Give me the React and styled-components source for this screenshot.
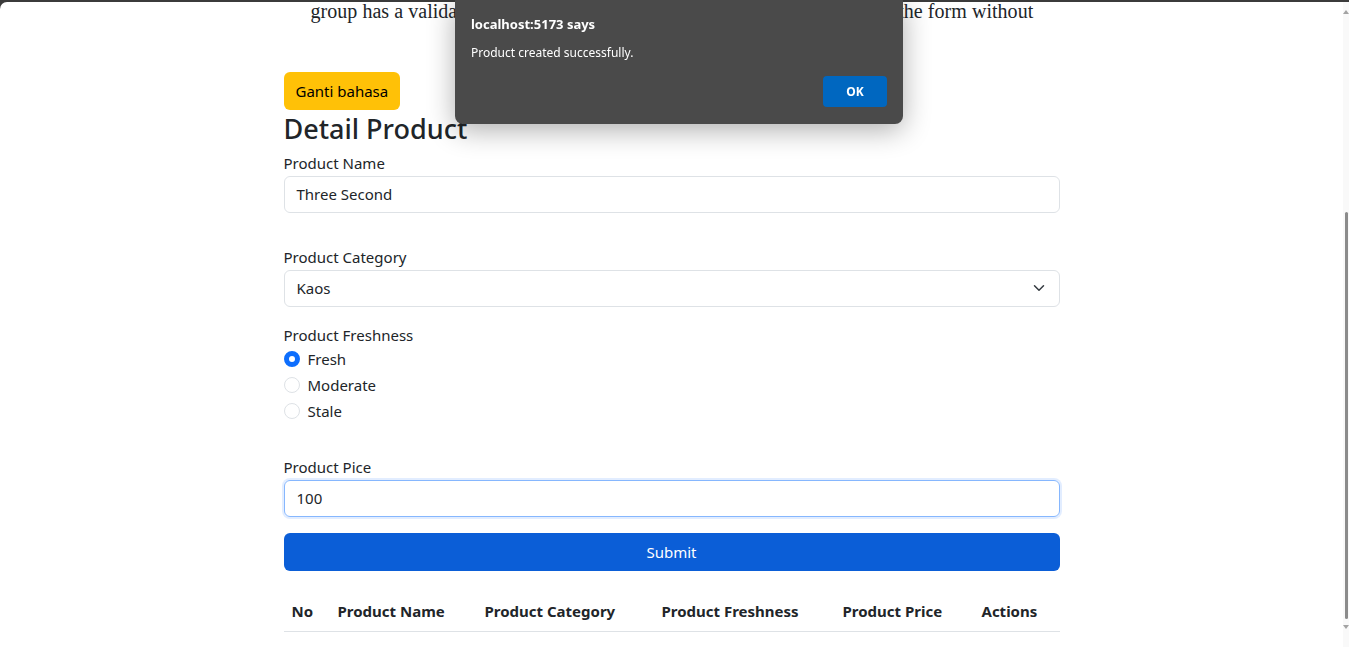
import React from "react";
import styled, { createGlobalStyle } from "styled-components";

const GlobalStyle = createGlobalStyle`
  html, body { margin: 0; padding: 0; background: #3b3b3b; }
  body { font-family: "Noto Sans", "Open Sans", sans-serif; color: #212529; }
  * { box-sizing: border-box; }
`;

const Frame = styled.div`
  display: flex;
  height: 647px;
  padding-top: 2px;
  overflow: hidden;
`;

const Page = styled.main`
  flex: 1;
  background: #fff;
  border-top-left-radius: 7px;
  overflow: hidden;
`;

const ScrollTrack = styled.div`
  width: 6px;
  background: #f9f9f9;
  display: flex;
  flex-direction: column;
  align-items: center;
`;

const Arrow = styled.div`
  width: 0;
  height: 0;
  border-left: 3px solid transparent;
  border-right: 3px solid transparent;
  ${(p) => (p.$down ? "border-top: 4px solid #a3a3a3;" : "border-bottom: 4px solid #a3a3a3;")}
  margin-top: ${(p) => p.$mt}px;
`;

const Thumb = styled.div`
  width: 3px;
  margin-left: 1px;
  height: 407px;
  margin-top: 198px;
  background: #8b8b8b;
  border-radius: 2px;
`;

const Container = styled.div`
  width: 776px;
  margin: 0 auto;
`;

const Intro = styled.p`
  font-family: "Liberation Serif", serif;
  font-size: 20px;
  line-height: 23px;
  margin: -2px 0 0;
  padding-left: 27px;
  white-space: nowrap;
  letter-spacing: 0.04px;
  color: #212529;
`;

const LangButton = styled.button`
  margin-top: 49px;
  height: 38px;
  padding: 0 12px;
  background: #ffc107;
  border: none;
  border-radius: 6px;
  font-family: inherit;
  font-size: 15px;
  color: #000;
  display: block;
`;

const Title = styled.h2`
  margin: 0 0 6px;
  padding-top: 2px;
  font-size: 27px;
  font-weight: 500;
  line-height: 33px;
`;

const Field = styled.div`
  margin-bottom: ${(p) => p.$mb}px;
`;

const Label = styled.label`
  display: block;
  font-size: 15px;
  line-height: 24px;
  margin-bottom: 1px;
`;

const Input = styled.div`
  height: 37px;
  border: 1px solid ${(p) => (p.$focus ? "#86b7fe" : "#dee2e6")};
  border-radius: 6px;
  padding: 0 12px 1px;
  display: flex;
  align-items: center;
  justify-content: space-between;
  font-size: 15px;
  ${(p) => (p.$focus ? "box-shadow: 0 0 0 2px rgba(13,110,253,0.12);" : "")}
`;

const RadioList = styled.div`
  display: flex;
  flex-direction: column;
  gap: 2px;
  margin-top: -1px;
`;

const RadioRow = styled.div`
  display: flex;
  align-items: center;
  height: 24px;
  gap: 8px;
  font-size: 15px;
`;

const RadioDot = styled.span`
  width: 16px;
  height: 16px;
  border-radius: 50%;
  border: ${(p) => (p.$checked ? "5px solid #0d6efd" : "1px solid #dee2e6")};
  background: #fff;
`;

const SubmitButton = styled.button`
  display: block;
  width: 100%;
  height: 38px;
  margin-bottom: 20px;
  background: #0b5ed7;
  border: none;
  border-radius: 6px;
  color: #fff;
  font-family: inherit;
  font-size: 15px;
`;

const Table = styled.table`
  width: 100%;
  border-collapse: collapse;
  table-layout: fixed;
`;

const Th = styled.th`
  padding: 8px;
  text-align: left;
  font-size: 15px;
  font-weight: 700;
  line-height: 24px;
  border-bottom: 1px solid #dee2e6;
  white-space: nowrap;
`;

const Dialog = styled.div`
  position: fixed;
  top: 0;
  left: 455px;
  width: 448px;
  height: 124px;
  background: #4a4a4a;
  border-radius: 0 0 8px 8px;
  box-shadow: 0 6px 28px rgba(0, 0, 0, 0.32);
  padding: 16px 16px 0;
  display: flex;
  flex-direction: column;
  color: #fff;
`;

const DialogTitle = styled.div`
  font-size: 13px;
  font-weight: 700;
  line-height: 17px;
`;

const DialogText = styled.div`
  font-size: 12px;
  line-height: 16px;
  margin-top: 12px;
`;

const OkButton = styled.button`
  align-self: flex-end;
  margin-top: 15px;
  width: 64px;
  height: 31px;
  background: #0067c0;
  border: none;
  border-radius: 4px;
  color: #fff;
  font-family: inherit;
  font-size: 12px;
  font-weight: 700;
`;

const Chevron = () => (
  <svg width="16" height="12" viewBox="0 0 16 16" fill="none">
    <path d="m2 5 6 6 6-6" stroke="#343a40" strokeWidth="2" strokeLinecap="round" strokeLinejoin="round" />
  </svg>
);

const columns = [
  ["No", 46],
  ["Product Name", 147],
  ["Product Category", 177],
  ["Product Freshness", 181],
  ["Product Price", 139],
  ["Actions", 86],
];

export default function App() {
  return (
    <>
      <GlobalStyle />
      <Frame>
        <Page>
          <Container>
            <Intro>
              group has a validation feedback message as well, so users cannot submit the form without
            </Intro>
            <LangButton>Ganti bahasa</LangButton>
            <Title>Detail Product</Title>
            <Field $mb={32}>
              <Label>Product Name</Label>
              <Input>Three Second</Input>
            </Field>
            <Field $mb={16}>
              <Label>Product Category</Label>
              <Input>
                Kaos
                <Chevron />
              </Input>
            </Field>
            <Field $mb={32}>
              <Label>Product Freshness</Label>
              <RadioList>
                <RadioRow>
                  <RadioDot $checked />
                  Fresh
                </RadioRow>
                <RadioRow>
                  <RadioDot />
                  Moderate
                </RadioRow>
                <RadioRow>
                  <RadioDot />
                  Stale
                </RadioRow>
              </RadioList>
            </Field>
            <Field $mb={16}>
              <Label>Product Pice</Label>
              <Input $focus>100</Input>
            </Field>
            <SubmitButton>Submit</SubmitButton>
            <Table>
              <colgroup>
                {columns.map(([n, w]) => (
                  <col key={n} style={{ width: w }} />
                ))}
              </colgroup>
              <thead>
                <tr>
                  {columns.map(([n]) => (
                    <Th key={n}>{n}</Th>
                  ))}
                </tr>
              </thead>
            </Table>
          </Container>
        </Page>
        <ScrollTrack>
          <Arrow $mt={8} />
          <Thumb />
          <Arrow $down $mt={6} />
        </ScrollTrack>
      </Frame>
      <Dialog>
        <DialogTitle>localhost:5173 says</DialogTitle>
        <DialogText>Product created successfully.</DialogText>
        <OkButton>OK</OkButton>
      </Dialog>
    </>
  );
}
